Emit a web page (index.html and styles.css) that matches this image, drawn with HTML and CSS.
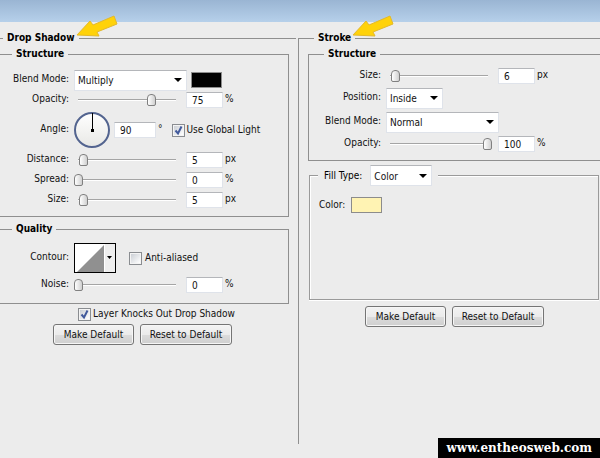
FILE: index.html
```html
<!DOCTYPE html>
<html lang="en">
<head>
    <meta charset="UTF-8">
    <meta name="viewport" content="width=device-width, initial-scale=1.0">
    <title>Layer Style</title>
    <link rel="stylesheet" href="styles.css">
</head>
<body>
    <div class="titlebar"></div>
    <main class="panels">
        <fieldset class="panel shadow">
            <legend>Drop Shadow
                <svg class="arrow" width="42" height="24" viewBox="0 0 42 24"><path d="M1 20 14 6l3 4L38 1l3 8-20 8 2 4z" fill="#ffd20a" stroke="#e3b92c"/></svg>
            </legend>
            <fieldset class="group structure">
                <legend>Structure</legend>
                <div class="row">
                    <label class="name" for="ds-blend">Blend Mode:</label>
                    <select id="ds-blend" class="wide"><option>Multiply</option></select>
                    <button class="swatch black" aria-label="Shadow color"></button>
                </div>
                <div class="row">
                    <label class="name" for="ds-opacity">Opacity:</label>
                    <input type="range" aria-label="Opacity" value="75">
                    <input type="text" id="ds-opacity" value="75">
                    <span class="unit">%</span>
                </div>
                <div class="row angle">
                    <label class="name" for="ds-angle">Angle:</label>
                    <svg class="dial" width="36" height="36" viewBox="0 0 36 36">
                        <defs>
                            <linearGradient id="face" x2="0" y2="1"><stop stop-color="#fff"/><stop offset="1" stop-color="#e8e8e5"/></linearGradient>
                        </defs>
                        <circle cx="18" cy="18" r="17" fill="url(#face)" stroke="#53648f" stroke-width="2"/>
                        <path d="M18.500 1v17" stroke="#000"/>
                        <path d="M17 17h3v3h-3z"/>
                    </svg>
                    <input type="text" id="ds-angle" class="angle-value" value="90">
                    <span class="unit">°</span>
                    <label class="check global"><input type="checkbox" checked>Use Global Light</label>
                </div>
                <div class="row">
                    <label class="name" for="ds-distance">Distance:</label>
                    <input type="range" aria-label="Distance" value="5">
                    <input type="text" id="ds-distance" value="5">
                    <span class="unit">px</span>
                </div>
                <div class="row">
                    <label class="name" for="ds-spread">Spread:</label>
                    <input type="range" aria-label="Spread" value="0">
                    <input type="text" id="ds-spread" value="0">
                    <span class="unit">%</span>
                </div>
                <div class="row">
                    <label class="name" for="ds-size">Size:</label>
                    <input type="range" aria-label="Size" value="5">
                    <input type="text" id="ds-size" value="5">
                    <span class="unit">px</span>
                </div>
            </fieldset>
            <fieldset class="group quality">
                <legend>Quality</legend>
                <div class="row contour-row">
                    <label class="name" for="ds-contour">Contour:</label>
                    <button id="ds-contour" class="contour">
                        <svg width="42" height="30" viewBox="0 0 42 30">
                            <path d="M0 0h42v30H0z"/>
                            <path d="M1 1h30v28H1z" fill="#fff"/>
                            <path d="M3 29 30 2v27z" fill="#909090"/>
                            <path d="M31 1h10v28H31z" fill="#eee"/>
                            <path d="M33 13h5l-2.500 3z"/>
                        </svg>
                    </button>
                    <label class="check"><input type="checkbox">Anti-aliased</label>
                </div>
                <div class="row">
                    <label class="name" for="ds-noise">Noise:</label>
                    <input type="range" aria-label="Noise" value="0">
                    <input type="text" id="ds-noise" value="0">
                    <span class="unit">%</span>
                </div>
            </fieldset>
            <label class="check knockout"><input type="checkbox" checked>Layer Knocks Out Drop Shadow</label>
            <div class="actions">
                <button class="btn">Make Default</button>
                <button class="btn reset">Reset to Default</button>
            </div>
        </fieldset>

        <fieldset class="panel stroke">
            <legend>Stroke
                <svg class="arrow" width="42" height="24" viewBox="0 0 42 24"><path d="M1 20 14 6l3 4L38 1l3 8-20 8 2 4z" fill="#ffd20a" stroke="#e3b92c"/></svg>
            </legend>
            <fieldset class="group">
                <legend>Structure</legend>
                <div class="row">
                    <label class="name" for="st-size">Size:</label>
                    <input type="range" aria-label="Size" value="5">
                    <input type="text" id="st-size" value="6">
                    <span class="unit">px</span>
                </div>
                <div class="row tall">
                    <label class="name" for="st-position">Position:</label>
                    <select id="st-position" class="narrow"><option>Inside</option></select>
                </div>
                <div class="row tall">
                    <label class="name" for="st-blend">Blend Mode:</label>
                    <select id="st-blend" class="wide"><option>Normal</option></select>
                </div>
                <div class="row">
                    <label class="name" for="st-opacity">Opacity:</label>
                    <input type="range" aria-label="Opacity" value="100">
                    <input type="text" id="st-opacity" value="100">
                    <span class="unit">%</span>
                </div>
            </fieldset>
            <fieldset class="fill">
                <legend>
                    <label for="st-fill">Fill Type:</label>
                    <select id="st-fill"><option>Color</option></select>
                </legend>
                <div class="row">
                    <label for="st-color">Color:</label>
                    <button id="st-color" class="swatch yellow"></button>
                </div>
            </fieldset>
            <div class="actions">
                <button class="btn">Make Default</button>
                <button class="btn reset">Reset to Default</button>
            </div>
        </fieldset>
    </main>
    <footer class="credit">www.entheosweb.com</footer>
</body>
</html>
```

FILE: styles.css
```css
* {
    box-sizing: border-box;
}
body {
    display: flex;
    flex-direction: column;
    min-height: 100vh;
    margin: 0;
    background-color: #ececec;
    color: #111;
    font-family: "DejaVu Sans Condensed", Tahoma, "DejaVu Sans", sans-serif;
    font-size: 10px;
    line-height: 12px;
}
input, select, button {
    margin: 0;
    font: inherit;
    color: #111;
}
.titlebar {
    height: 22px;
    background: linear-gradient(#9ab5d3, #b6d0ea);
}
.panels {
    flex: 1;
    display: grid;
    grid-template-columns: 149fr 151fr;
    padding-top: 10px;
}

/* panels and groups */
fieldset {
    min-width: 0;
    margin: 0;
    padding: 0;
    border: 0 solid #8f8f8f;
}
legend {
    padding: 0 4px;
    font-weight: bold;
    color: #000;
}
.panel {
    border-top-width: 1px;
}
.panel > legend {
    position: relative;
    margin-left: 3px;
}
.shadow {
    margin-right: 2px;
}
.stroke {
    border-left-width: 1px;
    padding-left: 9px;
}
.stroke > legend {
    margin-left: 6px;
}
.arrow {
    position: absolute;
    left: calc(100% - 3px);
    bottom: 5px;
}
.group {
    margin-top: 4px;
    padding: 6px 0;
    border-width: 1px 0 1px 1px;
}
.group legend {
    margin-left: 15px;
}
.shadow .group {
    margin-right: 7px;
    border-width: 1px 1px 1px 0;
}
.shadow .group legend {
    margin-left: 12px;
}
.shadow .structure {
    padding: 10px 0 6px;
}
.shadow .quality {
    margin-top: 6px;
    padding: 6px 0 8px;
}
.fill {
    min-height: 135px;
    margin: 4px 1px 0 1px;
    border-width: 1px;
    border-color: #9a9a9a;
    box-shadow: inset 1px 1px #fff, 0 1px #fff;
}
.fill legend {
    display: flex;
    align-items: center;
    gap: 8px;
    margin-left: 8px;
    padding: 0 6px;
    font-weight: normal;
    background-color: #ececec;
}
.fill .row {
    gap: 6px;
    padding: 9px;
    height: 38px;
}

/* rows */
.row {
    display: flex;
    align-items: center;
    height: 20px;
}
.row.tall {
    height: 24px;
}
.row.angle {
    height: 40px;
}
.contour-row {
    height: 34px;
}
.name {
    width: 69px;
    margin-right: 5px;
    padding-bottom: 2px;
    text-align: right;
}
.stroke .name {
    width: 72px;
}
.unit {
    margin-left: 2px;
    padding-bottom: 2px;
}

/* controls */
input[type="text"] {
    width: 37px;
    height: 16px;
    margin-left: 6px;
    padding: 0 5px;
    border: 1px solid #dfe3ea;
    border-top-color: #b4b6ba;
    background-color: #fff;
}
input[type="text"].angle-value {
    width: 42px;
    margin-left: 4px;
}
select {
    appearance: none;
    width: 62px;
    height: 21px;
    padding: 2px 3px 0;
    border: 1px solid #dfe3ea;
    border-top-color: #b4b6ba;
    background: #fff url("data:image/svg+xml,%3Csvg xmlns='http://www.w3.org/2000/svg' width='8' height='4'%3E%3Cpath d='M0 0h8L4 4z'/%3E%3C/svg%3E") no-repeat right 4px center;
}
select.wide {
    width: 113px;
}
select.narrow {
    width: 57px;
}
input[type="range"] {
    appearance: none;
    width: 106px;
    height: 14px;
    background: linear-gradient(#a5a5a5 50%, #fff 50%) no-repeat center / calc(100% - 8px) 2px;
}
input[type="range"]::-webkit-slider-thumb {
    appearance: none;
    width: 9px;
    height: 12px;
    border: 1px solid #808080;
    border-radius: 4px 4px 2px 2px;
    background: linear-gradient(90deg, #fff, #d0d0d0);
}
.check {
    display: flex;
    align-items: center;
    gap: 2px;
}
.global {
    margin-left: 9px;
}
.contour-row .check {
    margin-left: 13px;
    gap: 3px;
}
.knockout {
    height: 20px;
    margin-left: 78px;
}
input[type="checkbox"] {
    appearance: none;
    width: 13px;
    height: 13px;
    border: 1px solid #8a8d91;
    background: linear-gradient(135deg, #cbcfd5, #fff) no-repeat center / 9px 9px #f4f4f4;
}
input[type="checkbox"]:checked {
    background: url("data:image/svg+xml,%3Csvg xmlns='http://www.w3.org/2000/svg' width='11' height='11'%3E%3Cpath d='M2.500 5.500 5 8.500 8.500 1.500' fill='none' stroke='%23425a9c' stroke-width='2'/%3E%3C/svg%3E") no-repeat center, linear-gradient(135deg, #cbcfd5, #fff) no-repeat center / 9px 9px #f4f4f4;
}
.swatch {
    width: 31px;
    height: 16px;
    padding: 0;
    border: 1px solid #8c8c8c;
}
.black {
    margin-left: 4px;
    background-color: #000;
}
.yellow {
    background-color: #fff3b3;
}
.contour {
    padding: 0;
    border: none;
    background: none;
}
.contour svg {
    display: block;
}
.actions {
    display: flex;
    gap: 6px;
    margin-left: 53px;
}
.stroke .actions {
    margin: 6px 0 0 57px;
}
.btn {
    width: 81px;
    height: 21px;
    padding: 0;
    border: 1px solid #757575;
    border-radius: 3px;
    background: linear-gradient(#f3f3f3, #ebebeb 50%, #dcdcdc 50%, #cfcfcf);
    box-shadow: inset 0 0 0 1px #f6f6f6;
}
.reset {
    width: 92px;
}

/* the divider runs a little past the top of the credit */
.credit {
    align-self: flex-end;
    margin-top: -6px;
    padding: 0 8px;
    background-color: #000;
    color: #fff;
    font-family: "DejaVu Serif", serif;
    font-size: 12px;
    font-weight: bold;
    line-height: 20px;
}
```
